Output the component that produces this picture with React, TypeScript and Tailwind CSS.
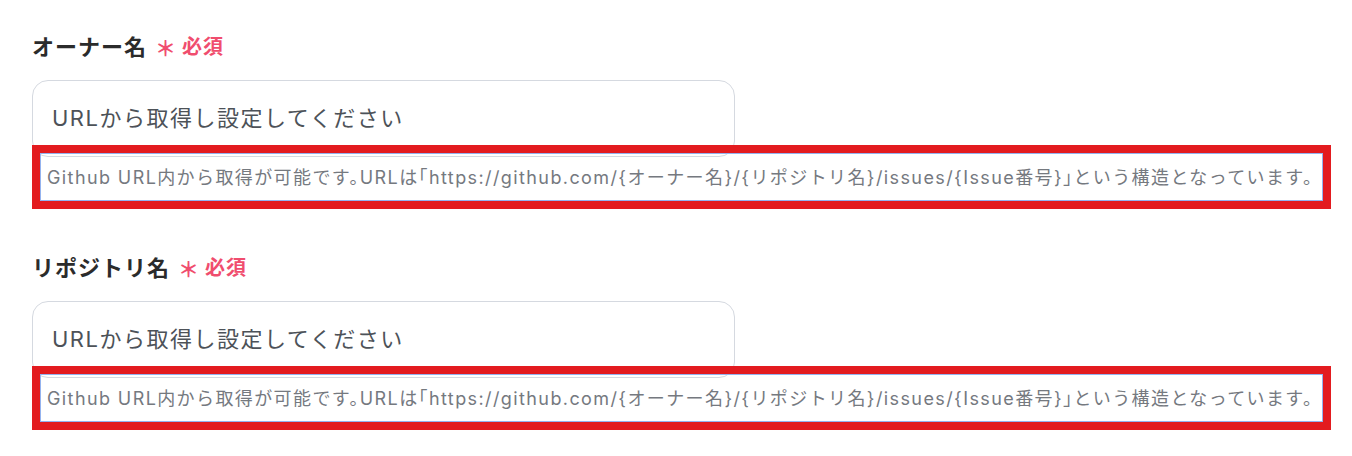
const helperText =
  'Github URL内から取得が可能です。URLは「https://github.com/{オーナー名}/{リポジトリ名}/issues/{Issue番号}」という構造となっています。';

type FieldProps = {
  label: string;
};

const Field = ({ label }: FieldProps) => {
  return (
    <div className="flex flex-col">
      <div className="flex items-center h-[30px] mb-[18px]">
        <span className="text-[22px] font-bold tracking-[1px] text-[#2b2b2b] leading-[30px]">{label}</span>
        <span className="ml-[8px] text-[21px] font-bold text-[#f04d6e] leading-[30px] translate-y-[2px]">＊</span>
        <span className="ml-[6px] text-[20px] font-bold tracking-[1px] text-[#f04d6e] leading-[30px]">必須</span>
      </div>
      <div className="w-[703px] h-[77px] rounded-[16px] border border-[#d5d9e0] bg-white flex items-center pl-[19px]">
        <span className="text-[22px] tracking-[1.5px] text-[#4d5258]">URLから取得し設定してください</span>
      </div>
      {/* annotation frame over the helper text */}
      <div className="relative z-10 -mt-[12px] w-[1299px] h-[64px] border-[8px] border-[#e31b1f]">
        <div className="h-full border border-[#94b3ef] flex items-center pl-[6px]">
          <span className="whitespace-nowrap text-[18px] tracking-[1.4px] text-[#75797f] [font-feature-settings:'halt']">
            {helperText}
          </span>
        </div>
      </div>
    </div>
  );
};

export default function App() {
  return (
    <div
      className="w-[1352px] h-[456px] bg-white pl-[32px] pt-[32px] overflow-hidden"
      style={{ fontFamily: 'Inter, "Noto Sans CJK JP", sans-serif' }}
    >
      <Field label="オーナー名" />
      <div className="h-[44px]" />
      <Field label="リポジトリ名" />
    </div>
  );
}
